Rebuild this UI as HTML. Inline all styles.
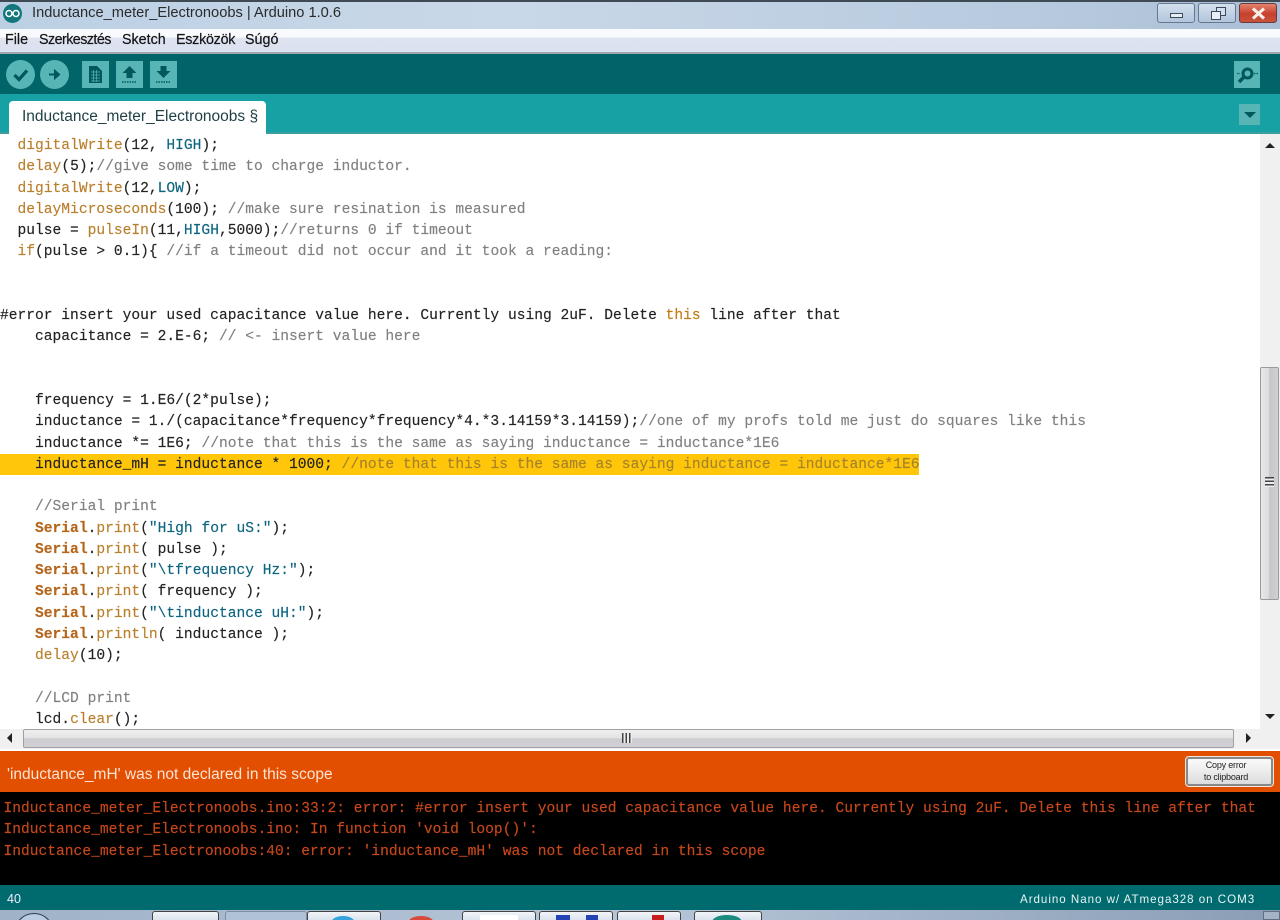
<!DOCTYPE html>
<html><head><meta charset="utf-8"><style>
*{box-sizing:border-box}
html,body{margin:0;padding:0;width:1280px;height:920px;overflow:hidden;background:#fff}
#r{position:relative;width:1280px;height:920px;overflow:hidden;font-family:"Liberation Sans",sans-serif}
.a{position:absolute}
#code,#con{font-family:"Liberation Mono",monospace;font-size:14.6px;line-height:21.25px;filter:blur(.35px);-webkit-text-stroke:.15px currentColor}
#code{left:0;top:136.2px;color:#222;width:1260px;height:593px;overflow:hidden}
#code div{height:21.25px;white-space:pre}
.k{color:#b97f2c}.b{color:#0b6480}.c{color:#808080}.s{color:#b5661a;font-weight:bold}.o{color:#c07a10}
#con{left:3.5px;top:799px;color:#c8481a;white-space:pre}
.tb{background:#58b5b6;position:absolute}
.wb{position:absolute;top:3px;height:20px;border:1px solid #66788f;border-radius:3px}
.tk{position:absolute;top:911px;height:12px;border:1px solid #444;border-radius:3px 3px 0 0;background:linear-gradient(#f2f5f9,#d4deea)}
.m{position:absolute;top:32px;font-size:14.3px;color:#151515;white-space:nowrap;filter:blur(.25px);-webkit-text-stroke:.2px #151515}
</style></head><body><div id="r">
<div class="a" style="left:0;top:0;width:1280px;height:29px;background:linear-gradient(90deg,#bcd0e4,#c9d8e8 40%,#b5c8dd 85%,#a9bed6);border-top:2px solid #3f4a55"></div>
<svg class="a" style="left:2px;top:3px" width="21" height="21" viewBox="0 0 21 21"><circle cx="10.5" cy="10.5" r="9.5" fill="#12767c"/><circle cx="7" cy="10.5" r="3" fill="none" stroke="#fff" stroke-width="1.5"/><circle cx="14" cy="10.5" r="3" fill="none" stroke="#fff" stroke-width="1.5"/></svg>
<div class="a" style="left:32px;top:5px;font-size:14.65px;color:#2b2b2b;white-space:nowrap;filter:blur(.3px)">Inductance_meter_Electronoobs | Arduino 1.0.6</div>
<div class="wb" style="left:1157px;width:38px;background:linear-gradient(#d4e0ee,#b2c5db)"><div class="a" style="left:12px;top:9px;width:13px;height:5px;background:#e8eef5;border:1px solid #3a4a5a"></div></div>
<div class="wb" style="left:1198px;width:38px;background:linear-gradient(#d4e0ee,#b2c5db)"><div class="a" style="left:17px;top:3px;width:10px;height:9px;border:1.5px solid #3a4a5a;background:#d4e0ee"></div><div class="a" style="left:12px;top:7px;width:10px;height:9px;border:1.5px solid #3a4a5a;background:#e8eef5"></div></div>
<div class="wb" style="left:1239px;width:38px;background:linear-gradient(#e3836f,#c6402c 55%,#c9533d);border-color:#6b3a3a"><svg class="a" style="left:11px;top:3px" width="15" height="13" viewBox="0 0 15 13"><path d="M2 1.5L13 11.5M13 1.5L2 11.5" stroke="#f4eee8" stroke-width="3.2"/></svg></div>

<div class="a" style="left:0;top:29px;width:1280px;height:23px;background:linear-gradient(#f8fafd 0,#f8fafd 35%,#dde3f1 40%,#dce2f0)"></div>
<div class="a" style="left:0;top:52px;width:1280px;height:2px;background:#9ea8ac"></div>
<div class="m" style="left:5px">File</div>
<div class="m" style="left:39px;letter-spacing:-.55px">Szerkesztés</div>
<div class="m" style="left:122px">Sketch</div>
<div class="m" style="left:176px;letter-spacing:-.25px">Eszközök</div>
<div class="m" style="left:245px">Súgó</div>

<div class="a" style="left:0;top:54px;width:1280px;height:40px;background:#006468"></div>
<svg class="a" style="left:5px;top:60px" width="65" height="30" viewBox="0 0 65 30"><circle cx="15.5" cy="14.5" r="14.5" fill="#58b5b6"/><path d="M9.5 15l4.5 4.5 8-9" fill="none" stroke="#00585c" stroke-width="3.2"/><circle cx="49.5" cy="14.5" r="14.5" fill="#58b5b6"/><path d="M44 14.5h6M50 11l4 3.5-4 3.500z" fill="#00585c" stroke="#00585c" stroke-width="2"/></svg>
<div class="tb" style="left:82px;top:61px;width:27px;height:27px"><svg width="27" height="27" viewBox="0 0 27 27"><path d="M7 5h8l5 5v12H7z" fill="#00585c"/><path d="M9 11h9M9 14h9M9 17h9M9 20h9M11.5 9v12M14.5 9v12" stroke="#58b5b6" stroke-width=".7"/></svg></div>
<div class="tb" style="left:116px;top:61px;width:27px;height:27px"><svg width="27" height="27" viewBox="0 0 27 27"><path d="M13.5 5l7 7h-4v5h-6v-5h-4z" fill="#00585c"/><path d="M6 21h15" stroke="#00585c" stroke-width="1.5" stroke-dasharray="1.5 1"/></svg></div>
<div class="tb" style="left:150px;top:61px;width:27px;height:27px"><svg width="27" height="27" viewBox="0 0 27 27"><path d="M10.5 5h6v5h4l-7 7-7-7h4z" fill="#00585c"/><path d="M6 21h15" stroke="#00585c" stroke-width="1.5" stroke-dasharray="1.5 1"/></svg></div>
<div class="tb" style="left:1234px;top:61px;width:26px;height:27px"><svg width="26" height="27" viewBox="0 0 26 27"><circle cx="13.5" cy="12.5" r="4.5" fill="none" stroke="#00585c" stroke-width="3"/><path d="M10 16l-5 5" stroke="#00585c" stroke-width="3.5"/><path d="M20 12.5h4M3 12.5h3" stroke="#00585c" stroke-width="1.2" stroke-dasharray="1.5 1"/></svg></div>

<div class="a" style="left:0;top:94px;width:1280px;height:39px;background:#17a1a5"></div>
<div class="a" style="left:0;top:132px;width:1280px;height:2px;background:#3d9ea0"></div>
<div class="a" style="left:9px;top:101px;width:257px;height:33px;background:#fff;border-radius:4px 4px 0 0"></div>
<div class="a" style="left:22px;top:108px;font-size:15.5px;color:#1f3f45;white-space:nowrap;filter:blur(.25px)">Inductance_meter_Electronoobs §</div>
<div class="a" style="left:1239px;top:104px;width:21px;height:21px;background:#58b5b6"><div class="a" style="left:5px;top:8px;width:0;height:0;border-left:6px solid transparent;border-right:6px solid transparent;border-top:6px solid #00585c"></div></div>

<div class="a" style="left:0;top:454px;width:919px;height:20.5px;background:#ffc60a"></div>
<div id="code" class="a"><div>  <span class="k">digitalWrite</span>(12, <span class="b">HIGH</span>);</div><div>  <span class="k">delay</span>(5);<span class="c">//give some time to charge inductor.</span></div><div>  <span class="k">digitalWrite</span>(12,<span class="b">LOW</span>);</div><div>  <span class="k">delayMicroseconds</span>(100); <span class="c">//make sure resination is measured</span></div><div>  pulse = <span class="k">pulseIn</span>(11,<span class="b">HIGH</span>,5000);<span class="c">//returns 0 if timeout</span></div><div>  <span class="k">if</span>(pulse &gt; 0.1){ <span class="c">//if a timeout did not occur and it took a reading:</span></div><div> </div><div> </div><div>#error insert your used capacitance value here. Currently using 2uF. Delete <span class="o">this</span> line after that</div><div>    capacitance = 2.E-6; <span class="c">// &lt;- insert value here</span></div><div> </div><div> </div><div>    frequency = 1.E6/(2*pulse);</div><div>    inductance = 1./(capacitance*frequency*frequency*4.*3.14159*3.14159);<span class="c">//one of my profs told me just do squares like this</span></div><div>    inductance *= 1E6; <span class="c">//note that this is the same as saying inductance = inductance*1E6</span></div><div>    inductance_mH = inductance * 1000; <span class="c" style="color:#a5832a">//note that this is the same as saying inductance = inductance*1E6</span></div><div> </div><div>    <span class="c">//Serial print</span></div><div>    <span class="s">Serial</span>.<span class="k">print</span>(<span class="b">"High for uS:"</span>);</div><div>    <span class="s">Serial</span>.<span class="k">print</span>( pulse );</div><div>    <span class="s">Serial</span>.<span class="k">print</span>(<span class="b">"\tfrequency Hz:"</span>);</div><div>    <span class="s">Serial</span>.<span class="k">print</span>( frequency );</div><div>    <span class="s">Serial</span>.<span class="k">print</span>(<span class="b">"\tinductance uH:"</span>);</div><div>    <span class="s">Serial</span>.<span class="k">println</span>( inductance );</div><div>    <span class="k">delay</span>(10);</div><div> </div><div>    <span class="c">//LCD print</span></div><div>    lcd.<span class="k">clear</span>();</div></div>

<div class="a" style="left:1260px;top:134px;width:20px;height:596px;background:#f0f0f0"></div>
<div class="a" style="left:1265px;top:143px;width:0;height:0;border-left:5px solid transparent;border-right:5px solid transparent;border-bottom:5px solid #222"></div>
<div class="a" style="left:1265px;top:714px;width:0;height:0;border-left:5px solid transparent;border-right:5px solid transparent;border-top:5px solid #222"></div>
<div class="a" style="left:1260px;top:367px;width:19px;height:233px;background:linear-gradient(90deg,#e8e8ea,#dcdce0 45%,#c6c6ca 50%,#d0d0d4);border:1px solid #9a9a9a;border-radius:2px"></div>
<div class="a" style="left:1265px;top:477px;width:9px;height:10px;background:repeating-linear-gradient(#444 0,#444 1.5px,#eee 1.5px,#eee 3.5px)"></div>

<div class="a" style="left:0;top:729px;width:1280px;height:20px;background:#f0f0f0"></div>
<div class="a" style="left:7px;top:733px;width:0;height:0;border-top:5px solid transparent;border-bottom:5px solid transparent;border-right:5px solid #222"></div>
<div class="a" style="left:1246px;top:733px;width:0;height:0;border-top:5px solid transparent;border-bottom:5px solid transparent;border-left:5px solid #222"></div>
<div class="a" style="left:23px;top:729px;width:1211px;height:19px;background:linear-gradient(#efefef,#e4e4e6 45%,#cdcdd1 52%,#d2d2d6);border:1px solid #a0a0a0;border-radius:2px"></div>
<div class="a" style="left:622px;top:733px;width:10px;height:10px;background:repeating-linear-gradient(90deg,#444 0,#444 1.5px,#eee 1.5px,#eee 3.5px)"></div>
<div class="a" style="left:0;top:749px;width:1280px;height:2px;background:#fff"></div>

<div class="a" style="left:0;top:751px;width:1280px;height:41px;background:#e34f00"></div>
<div class="a" style="left:7px;top:766px;font-size:15.5px;color:#fde4d4;white-space:nowrap;filter:blur(.25px)">'inductance_mH' was not declared in this scope</div>
<div class="a" style="left:1186px;top:757px;width:87px;height:29px;background:linear-gradient(#fafafa,#ececec 50%,#dcdcdc);border:2px solid #888;outline:1px solid #f4e6dc;border-radius:3px"></div>
<div class="a" style="left:1186px;top:760px;width:80px;font-size:9px;line-height:11.5px;color:#222;text-align:center;letter-spacing:-.2px">Copy error<br>to clipboard</div>

<div class="a" style="left:0;top:792px;width:1280px;height:93px;background:#000"></div>
<div id="con" class="a">Inductance_meter_Electronoobs.ino:33:2: error: #error insert your used capacitance value here. Currently using 2uF. Delete this line after that
Inductance_meter_Electronoobs.ino: In function 'void loop()':
Inductance_meter_Electronoobs:40: error: 'inductance_mH' was not declared in this scope</div>

<div class="a" style="left:0;top:885px;width:1280px;height:25px;background:#006b6e"></div>
<div class="a" style="left:7px;top:892px;font-size:12.5px;color:#eef;white-space:nowrap">40</div>
<div class="a" style="left:1020px;top:893px;font-size:11.6px;color:#e8f4f4;white-space:nowrap;letter-spacing:.96px;filter:blur(.2px)">Arduino Nano w/ ATmega328 on COM3</div>

<div class="a" style="left:0;top:910px;width:1280px;height:10px;background:linear-gradient(90deg,#9fb2c8,#b6c6d8 50%,#8a9db5)"></div>
<div class="a" style="left:14px;top:913px;width:40px;height:40px;border-radius:50%;background:#b9cce0;border:1px solid #2b3f58"></div>
<div class="tk" style="left:152px;width:67px"></div>
<div class="tk" style="left:225px;width:82px;background:#b0c2d6;border-color:#7d8fa5"></div>
<div class="tk" style="left:307px;width:74px"></div>
<div class="a" style="left:331px;top:916px;width:24px;height:14px;border-radius:50%;background:#35a3dc"></div>
<div class="tk" style="left:462px;width:74px"></div>
<div class="a" style="left:408px;top:916px;width:26px;height:14px;border-radius:50%;background:#d94a3a"></div>
<div class="a" style="left:480px;top:915px;width:38px;height:5px;background:#fff"></div>
<div class="tk" style="left:539px;width:74px"></div>
<div class="a" style="left:556px;top:915px;width:14px;height:5px;background:#2444b8"></div>
<div class="a" style="left:586px;top:915px;width:12px;height:5px;background:#2444b8"></div>
<div class="tk" style="left:617px;width:64px"></div>
<div class="a" style="left:652px;top:915px;width:12px;height:5px;background:#c81e1e"></div>
<div class="tk" style="left:694px;width:68px"></div>
<div class="a" style="left:712px;top:915px;width:30px;height:14px;border-radius:50%;background:#1c8a80"></div>
<div class="a" style="left:1263px;top:911px;width:17px;height:9px;background:#a4b4c6;border:1px solid #5f7085"></div>
</div></body></html>
